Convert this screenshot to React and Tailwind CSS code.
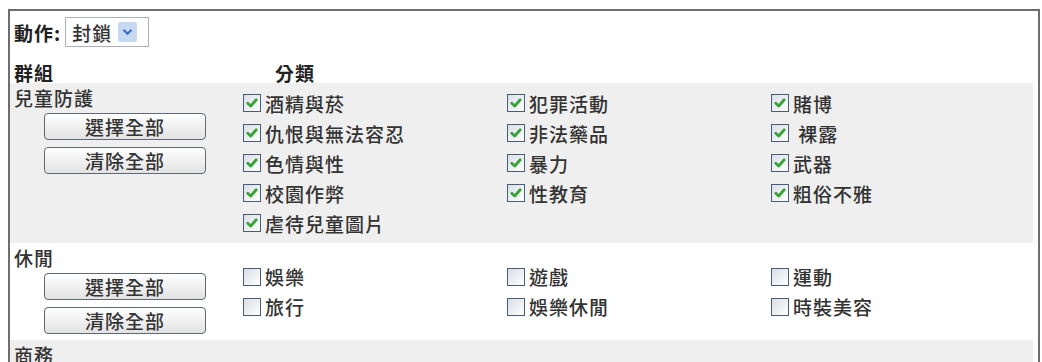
import React from 'react';

const FONT = { fontFamily: '"Noto Sans CJK TC", "Noto Sans", sans-serif' };

const groups = [
  {
    name: '兒童防護',
    bg: 'bg-[#efefef]',
    items: [
      ['酒精與菸', '犯罪活動', '賭博'],
      ['仇恨與無法容忍', '非法藥品', ' 裸露'],
      ['色情與性', '暴力', '武器'],
      ['校園作弊', '性教育', '粗俗不雅'],
      ['虐待兒童圖片'],
    ],
    checked: true,
  },
  {
    name: '休閒',
    bg: 'bg-white',
    items: [
      ['娛樂', '遊戲', '運動'],
      ['旅行', '娛樂休閒', '時裝美容'],
    ],
    checked: false,
  },
];

function Box({ checked }) {
  return (
    <span className="flex h-[18px] w-[18px] shrink-0 items-center justify-center border border-[#4a5d78] bg-gradient-to-br from-[#d9dfe6] to-white">
      {checked && (
        <svg width="14" height="14" viewBox="0 0 14 14">
          <path d="M2.8 7.2 L5.7 10 L11.2 3.8" fill="none" stroke="#38a238" strokeWidth="2.8" strokeLinecap="round" strokeLinejoin="round" />
        </svg>
      )}
    </span>
  );
}

function Button({ children }) {
  return (
    <button
      type="button"
      className="flex h-[27px] w-[162px] items-center justify-center rounded-[4px] border border-[#5f6873] bg-gradient-to-b from-white to-[#e2e2e2] text-[19px] font-medium leading-none tracking-[1px] text-[#333]"
    >
      {children}
    </button>
  );
}

export default function App() {
  return (
    <div className="h-[362px] overflow-hidden bg-white pl-[8px] pt-[9px] text-[#222]" style={FONT}>
      <div className="w-[1032px] border-2 border-[#6e6e6e] pr-[5px]">
        <div className="flex items-center gap-[4px] pl-[4px] pt-[6px]">
          <span className="text-[19px] font-bold leading-none tracking-[1px]">動作:</span>
          <div className="flex h-[30px] w-[84px] items-center border border-[#a9b0b8] bg-white pl-[6px]">
            <span className="text-[19px] font-medium leading-none tracking-[1px] text-[#333]">封鎖</span>
            <span className="ml-[6px] flex h-[20px] w-[19px] items-center justify-center rounded-[2px] bg-[#c7daf4]">
              <svg width="11" height="8" viewBox="0 0 11 8">
                <path d="M1.5 1.8 L5.5 5.8 L9.5 1.8" fill="none" stroke="#3f6fc4" strokeWidth="2.2" />
              </svg>
            </span>
          </div>
        </div>
        <div className="mt-[14px] flex h-[22px] items-center text-[19px] font-bold leading-none tracking-[1px]">
          <div className="w-[233px] pl-[4px]">群組</div>
          <div className="pl-[32px]">分類</div>
        </div>
        {groups.map((g) => (
          <div key={g.name} className={`flex ${g.bg}`}>
            <div className="w-[233px] shrink-0 pb-[6px] pt-[4px]">
              <div className="h-[22px] pl-[4px] text-[19px] font-medium leading-[22px] tracking-[1px] text-[#333]">{g.name}</div>
              <div className="mt-[4px] flex flex-col gap-[7px] pl-[34px]">
                <Button>選擇全部</Button>
                <Button>清除全部</Button>
              </div>
            </div>
            <div className="flex flex-1 flex-col justify-center py-[5px]">
              {g.items.map((row, i) => (
                <div key={i} className="flex h-[30px] items-center">
                  {row.map((label) => (
                    <div key={label} className="flex w-[264px] items-center gap-[4px]">
                      <Box checked={g.checked} />
                      <span className="whitespace-pre text-[19px] font-medium leading-none tracking-[1px] text-[#333]">{label}</span>
                    </div>
                  ))}
                </div>
              ))}
            </div>
          </div>
        ))}
        <div className="h-[40px] bg-[#efefef] pl-[4px] pt-[4px]">
          <div className="h-[22px] text-[19px] font-medium leading-[22px] tracking-[1px] text-[#333]">商務</div>
        </div>
      </div>
    </div>
  );
}
